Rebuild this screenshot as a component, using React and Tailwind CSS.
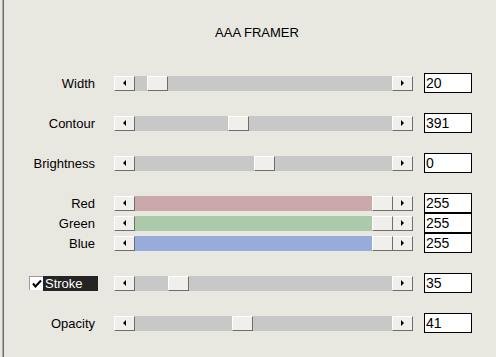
const rows = [
  { label: 'Width', value: '20', pos: 12, track: 'bg-[#c8c8c8]', gap: 'mt-[33px]' },
  { label: 'Contour', value: '391', pos: 93, track: 'bg-[#c8c8c8]', gap: 'mt-[20px]' },
  { label: 'Brightness', value: '0', pos: 119, track: 'bg-[#c8c8c8]', gap: 'mt-[20px]' },
  { label: 'Red', value: '255', pos: 237, track: 'bg-[#c9a9aa]', gap: 'mt-[20px]' },
  { label: 'Green', value: '255', pos: 237, track: 'bg-[#aacaaa]', gap: 'mt-0' },
  { label: 'Blue', value: '255', pos: 237, track: 'bg-[#98acdc]', gap: 'mt-0' },
  { label: 'Stroke', value: '35', pos: 33, track: 'bg-[#c8c8c8]', gap: 'mt-[20px]', check: true },
  { label: 'Opacity', value: '41', pos: 97, track: 'bg-[#c8c8c8]', gap: 'mt-[20px]' },
]

const face =
  'h-[15px] w-[21px] shrink-0 bg-[#f0efeb] border border-t-white border-l-white border-b-[#6e6e6e] border-r-[#6e6e6e] flex items-center justify-center'

function Scrollbar({ pos, track }) {
  return (
    <div className="flex h-[15px] w-[299px] shrink-0">
      <div className={face}>
        <div className="w-0 h-0 border-y-[3px] border-y-transparent border-r-[3px] border-r-black" />
      </div>
      <div className={`relative flex-1 h-[15px] ${track}`}>
        <div className={`absolute top-0 ${face}`} style={{ left: pos }} />
      </div>
      <div className={face}>
        <div className="w-0 h-0 border-y-[3px] border-y-transparent border-l-[3px] border-l-black" />
      </div>
    </div>
  )
}

function Row({ row }) {
  return (
    <div className={`flex items-center h-[20px] ${row.gap}`}>
      {row.check ? (
        <div className="flex items-center w-[94px] shrink-0 mr-[16px]">
          <div className="ml-[25px] w-[14px] h-[14px] shrink-0 bg-white border-t border-l border-[#9a9a9a] flex items-center justify-center">
            <svg width="10" height="9" viewBox="0 0 10 9">
              <path d="M1 4.5 L3.5 7.5 L9 1.5" stroke="black" strokeWidth="2" fill="none" />
            </svg>
          </div>
          <div className="w-[55px] h-[15px] shrink-0 bg-[#242424] text-white pl-[2px] leading-[15px]">
            {row.label}
          </div>
        </div>
      ) : (
        <div className="w-[91px] shrink-0 mr-[19px] text-right leading-[15px]">{row.label}</div>
      )}
      <Scrollbar pos={row.pos} track={row.track} />
      <div className="ml-[11px] w-[48px] h-[20px] shrink-0 bg-white border border-black pl-[1px] leading-[18px] text-[14px]">
        {row.value}
      </div>
    </div>
  )
}

export default function App() {
  return (
    <div
      className="w-[496px] h-[357px] bg-[#e8e7e0] text-black text-[13px] overflow-hidden"
      style={{ fontFamily: '"Liberation Sans", Arial, sans-serif' }}
    >
      <div className="ml-[2px] h-full border-l border-[#a9a9a9]">
        <div className="h-full border-l border-[#6a6a6a] flex flex-col">
          <div className="mt-[25px] h-[15px] leading-[15px] text-center pl-[14px]">AAA FRAMER</div>
          {rows.map((r) => (
            <Row key={r.label} row={r} />
          ))}
        </div>
      </div>
    </div>
  )
}
